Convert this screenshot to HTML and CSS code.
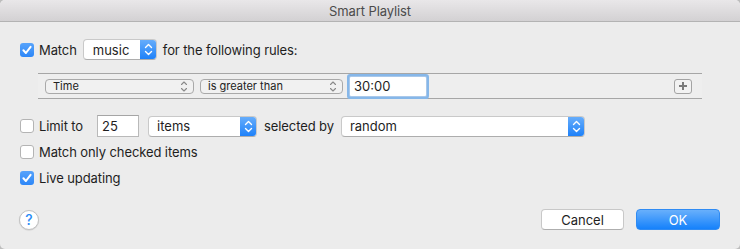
FILE: index.html
```html
<!DOCTYPE html>
<html lang="en">
<head>
<meta charset="utf-8">
<title>Smart Playlist</title>
<link rel="stylesheet" href="styles.css">
</head>
<body>
<div class="window">
  <div class="titlebar">Smart Playlist</div>
  <div class="content">
    <div class="row row-match">
      <span class="check checked"><svg width="14" height="14" viewBox="0 0 14 14"><path d="M3.4 7.3 L5.9 10 L10.6 3.8" fill="none" stroke="#fff" stroke-width="2" stroke-linecap="round" stroke-linejoin="round"/></svg></span>
      <span class="label">Match</span>
      <span class="popup popup-music"><span class="popup-text">music</span><span class="stepper"><svg width="17" height="19" viewBox="0 0 17 19"><path d="M5.5 7.5 L8.5 4.5 L11.5 7.5 M5.5 11.5 L8.5 14.5 L11.5 11.5" fill="none" stroke="#fff" stroke-width="1.4" stroke-linecap="round" stroke-linejoin="round"/></svg></span></span>
      <span class="label label-rules">for the following rules:</span>
    </div>

    <div class="rules">
      <span class="mini-popup mini-time"><span>Time</span><svg class="mini-arrows" width="8" height="13" viewBox="0 0 8 13"><path d="M1.5 4.5 L4 2 L6.5 4.5 M1.5 8.5 L4 11 L6.5 8.5" fill="none" stroke="#8a8a8a" stroke-width="1.1" stroke-linecap="round" stroke-linejoin="round"/></svg></span>
      <span class="mini-popup mini-op"><span>is greater than</span><svg class="mini-arrows" width="8" height="13" viewBox="0 0 8 13"><path d="M1.5 4.5 L4 2 L6.5 4.5 M1.5 8.5 L4 11 L6.5 8.5" fill="none" stroke="#8a8a8a" stroke-width="1.1" stroke-linecap="round" stroke-linejoin="round"/></svg></span>
      <span class="field field-focus">30:00</span>
      <span class="plus"><svg width="10" height="10" viewBox="0 0 10 10"><path d="M5 1 V9 M1 5 H9" stroke="#7b7b7b" stroke-width="2"/></svg></span>
    </div>

    <div class="row row-limit">
      <span class="check"></span>
      <span class="label">Limit to</span>
      <span class="field field-num">25</span>
      <span class="popup popup-items"><span class="popup-text">items</span><span class="stepper"><svg width="17" height="19" viewBox="0 0 17 19"><path d="M5.5 7.5 L8.5 4.5 L11.5 7.5 M5.5 11.5 L8.5 14.5 L11.5 11.5" fill="none" stroke="#fff" stroke-width="1.4" stroke-linecap="round" stroke-linejoin="round"/></svg></span></span>
      <span class="label label-sel">selected by</span>
      <span class="popup popup-random"><span class="popup-text">random</span><span class="stepper"><svg width="17" height="19" viewBox="0 0 17 19"><path d="M5.5 7.5 L8.5 4.5 L11.5 7.5 M5.5 11.5 L8.5 14.5 L11.5 11.5" fill="none" stroke="#fff" stroke-width="1.4" stroke-linecap="round" stroke-linejoin="round"/></svg></span></span>
    </div>

    <div class="row row-only">
      <span class="check"></span>
      <span class="label">Match only checked items</span>
    </div>

    <div class="row row-live">
      <span class="check checked"><svg width="14" height="14" viewBox="0 0 14 14"><path d="M3.4 7.3 L5.9 10 L10.6 3.8" fill="none" stroke="#fff" stroke-width="2" stroke-linecap="round" stroke-linejoin="round"/></svg></span>
      <span class="label">Live updating</span>
    </div>

    <div class="buttons">
      <span class="help">?</span>
      <span class="spacer"></span>
      <span class="btn btn-cancel">Cancel</span>
      <span class="btn btn-ok">OK</span>
    </div>
  </div>
</div>
</body>
</html>
```

FILE: styles.css
```css
html, body {
  margin: 0;
  padding: 0;
  background: #bdbdbd;
}
body {
  font-family: Inter, "Liberation Sans", sans-serif;
  font-size: 13px;
  color: #1e1e1e;
}
.window {
  width: 740px;
  height: 249px;
  background: #ececec;
  border-radius: 5px;
  overflow: hidden;
}
.titlebar {
  height: 21px;
  border-bottom: 1px solid #b3b3b3;
  background: linear-gradient(#e9e7e9, #d3d1d3);
  display: flex;
  align-items: center;
  justify-content: center;
  color: #4b4b4b;
  font-size: 13px;
  letter-spacing: -0.1px;
}
.content {
  padding: 17px 20px 0 20px;
  display: flex;
  flex-direction: column;
}
.row {
  display: flex;
  align-items: center;
}
.label {
  white-space: nowrap;
  letter-spacing: -0.1px;
}
.check {
  width: 14px;
  height: 14px;
  box-sizing: border-box;
  border-radius: 3px;
  border: 1px solid #b4b4b4;
  background: #fff;
  margin-right: 5px;
  display: inline-flex;
  flex: none;
}
.check.checked {
  border: none;
  background: linear-gradient(#57a3fb, #2d87f8);
}
.check svg { display: block; }

/* Match row */
.row-match { height: 21px; }
.popup {
  height: 21px;
  box-sizing: border-box;
  background: #fff;
  border: 1px solid #c9c9c9;
  border-bottom-color: #adadad;
  border-radius: 4px;
  display: flex;
  align-items: center;
  overflow: hidden;
  flex: none;
}
.popup-text {
  flex: 1;
  white-space: nowrap;
}
.stepper {
  width: 17px;
  height: 21px;
  margin: -1px -1px -1px 0;
  background: linear-gradient(#6aaffb, #1a7ff9);
  display: flex;
  align-items: center;
  justify-content: center;
  flex: none;
}
.stepper svg { display: block; }
.popup-music {
  width: 74px;
  margin-left: 6px;
}
.popup-music .popup-text { padding-left: 9px; }
.label-rules { margin-left: 6px; }

/* Rules box */
.rules {
  margin-top: 13px;
  margin-left: 18px;
  width: 664px;
  height: 26px;
  box-sizing: border-box;
  border-top: 1px solid #a6a6a6;
  border-bottom: 1px solid #a6a6a6;
  background: #eeeeee;
  display: flex;
  align-items: center;
  padding-left: 7px;
}
.mini-popup {
  height: 15px;
  box-sizing: border-box;
  border: 1px solid #a9a9a9;
  border-radius: 4px;
  background: #f1f1f1;
  font-size: 11px;
  display: flex;
  align-items: center;
  justify-content: space-between;
  padding: 0 5px 0 7px;
  flex: none;
  color: #222;
}
.mini-arrows { display: block; }
.mini-time { width: 149px; }
.mini-op { width: 143px; margin-left: 6px; }
.field {
  box-sizing: border-box;
  background: #fff;
  display: flex;
  align-items: center;
  flex: none;
}
.field-focus {
  width: 76px;
  height: 19px;
  margin-left: 7px;
  padding-left: 4px;
  box-shadow: 0 0 0 1px #a9c8ea, 0 0 0 3px #86b7e9;
  border-radius: 1px;
}
.plus {
  margin-left: auto;
  margin-right: 10px;
  width: 18px;
  height: 15px;
  box-sizing: border-box;
  border: 1px solid #a3a3a3;
  border-radius: 3px;
  background: #f2f2f2;
  display: flex;
  align-items: center;
  justify-content: center;
}
.plus svg { display: block; }

/* Limit row */
.row-limit {
  margin-top: 16px;
  height: 22px;
}
.field-num {
  width: 42px;
  height: 22px;
  margin-left: 14px;
  padding-left: 4px;
  border: 1px solid #b9b9b9;
  border-top-color: #a5a5a5;
}
.popup-items {
  width: 109px;
  margin-left: 9px;
}
.popup-items .popup-text { padding-left: 8px; }
.label-sel { margin-left: 7px; }
.popup-random {
  width: 244px;
  margin-left: 7px;
}
.popup-random .popup-text { padding-left: 8px; }

.row-only {
  margin-top: 7px;
  height: 16px;
}
.row-live {
  margin-top: 10px;
  height: 16px;
}

/* Buttons */
.buttons {
  margin-top: 23px;
  height: 21px;
  display: flex;
  align-items: center;
}
.help {
  width: 20px;
  height: 20px;
  box-sizing: border-box;
  margin-left: -1px;
  border-radius: 50%;
  background: #fff;
  border: 1px solid #c2c2c2;
  box-shadow: 0 0.5px 1px rgba(0,0,0,0.15);
  color: #2b8cf6;
  font-size: 14px;
  font-weight: 500;
  display: flex;
  align-items: center;
  justify-content: center;
}
.spacer { flex: 1; }
.btn {
  height: 21px;
  box-sizing: border-box;
  border-radius: 4px;
  display: flex;
  align-items: center;
  justify-content: center;
  flex: none;
}
.btn-cancel {
  width: 83px;
  background: #fff;
  border: 1px solid #c8c8c8;
  border-bottom-color: #aeaeae;
  color: #1e1e1e;
}
.btn-ok {
  width: 84px;
  margin-left: 12px;
  background: linear-gradient(#69b0fb, #1581fb);
  border: 1px solid #2f8bf3;
  color: #fff;
}
```
